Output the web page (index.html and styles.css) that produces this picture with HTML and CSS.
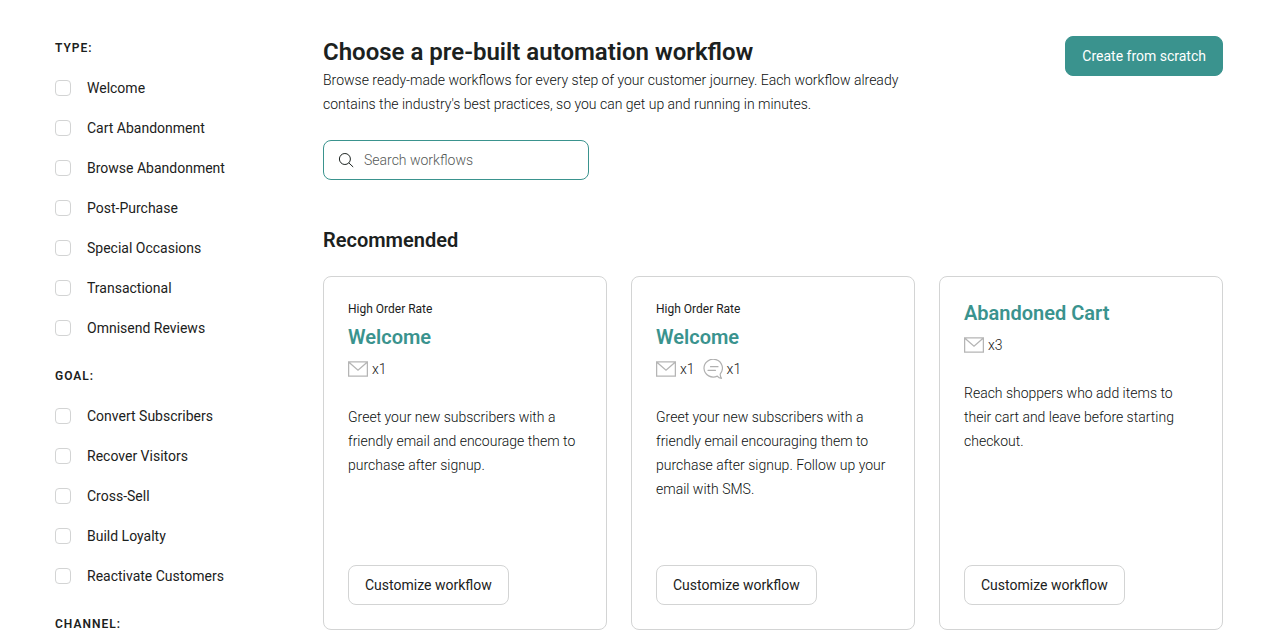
FILE: index.html
```html
<!DOCTYPE html>
<html lang="en">
<head>
<meta charset="utf-8">
<meta name="viewport" content="width=device-width, initial-scale=1">
<title>Automation workflows</title>
<link rel="stylesheet" href="styles.css">
</head>
<body>
<svg class="sprite" aria-hidden="true">
  <symbol id="mail" viewBox="0 0 20 16">
    <path d="M.6 .9h18.800v14.200H.6zM.6 .9 10 9.200 19.400 .9" fill="none" stroke="#b5b5b5" stroke-width="1.300"/>
  </symbol>
  <symbol id="chat" viewBox="0 0 20 20">
    <path d="M14.300 17.100A9.200 8.900 0 1 1 17.300 14.800Q16.900 17 18.500 19.300Q15.800 19.200 14.300 17.100M7.500 7.700h7.500M5 11.300h7.500" fill="none" stroke="#b0b0b0" stroke-width="1.200" stroke-linecap="round" stroke-linejoin="round"/>
  </symbol>
</svg>
<div class="page">
  <aside class="filters">
    <fieldset class="group">
      <legend class="group-title">TYPE:</legend>
      <label class="option"><input class="check" type="checkbox">Welcome</label>
      <label class="option"><input class="check" type="checkbox">Cart Abandonment</label>
      <label class="option"><input class="check" type="checkbox">Browse Abandonment</label>
      <label class="option"><input class="check" type="checkbox">Post-Purchase</label>
      <label class="option"><input class="check" type="checkbox">Special Occasions</label>
      <label class="option"><input class="check" type="checkbox">Transactional</label>
      <label class="option"><input class="check" type="checkbox">Omnisend Reviews</label>
    </fieldset>
    <fieldset class="group">
      <legend class="group-title">GOAL:</legend>
      <label class="option"><input class="check" type="checkbox">Convert Subscribers</label>
      <label class="option"><input class="check" type="checkbox">Recover Visitors</label>
      <label class="option"><input class="check" type="checkbox">Cross-Sell</label>
      <label class="option"><input class="check" type="checkbox">Build Loyalty</label>
      <label class="option"><input class="check" type="checkbox">Reactivate Customers</label>
    </fieldset>
    <fieldset class="group">
      <legend class="group-title">CHANNEL:</legend>
    </fieldset>
  </aside>
  <main class="content">
    <header class="header">
      <div class="intro">
        <h1 class="title">Choose a pre-built automation workflow</h1>
        <p class="text">Browse ready-made workflows for every step of your customer journey. Each workflow already contains the industry's best practices, so you can get up and running in minutes.</p>
      </div>
      <button class="button button-primary" type="button">Create from scratch</button>
    </header>
    <label class="search">
      <svg class="search-icon" viewBox="0 0 16 16" aria-hidden="true"><path d="M12.400 7a5.500 5.500 0 1 1-11 0a5.500 5.500 0 0 1 11 0M10.800 10.900 15.200 15" fill="none" stroke="#1f2624" stroke-width="1"/></svg>
      <input class="search-input" type="text" placeholder="Search workflows" aria-label="Search workflows">
    </label>
    <h2 class="section-title">Recommended</h2>
    <div class="cards">
      <article class="card">
        <p class="tag">High Order Rate</p>
        <h3 class="card-title">Welcome</h3>
        <div class="channels">
          <span class="channel"><svg class="icon-mail" aria-hidden="true"><use href="#mail"/></svg>x1</span>
        </div>
        <p class="text card-text">Greet your new subscribers with a friendly email and encourage them to purchase after signup.</p>
        <button class="button" type="button">Customize workflow</button>
      </article>
      <article class="card">
        <p class="tag">High Order Rate</p>
        <h3 class="card-title">Welcome</h3>
        <div class="channels">
          <span class="channel"><svg class="icon-mail" aria-hidden="true"><use href="#mail"/></svg>x1</span>
          <span class="channel"><svg class="icon-chat" aria-hidden="true"><use href="#chat"/></svg>x1</span>
        </div>
        <p class="text card-text">Greet your new subscribers with a friendly email encouraging them to purchase after signup. Follow up your email with SMS.</p>
        <button class="button" type="button">Customize workflow</button>
      </article>
      <article class="card">
        <h3 class="card-title">Abandoned Cart</h3>
        <div class="channels">
          <span class="channel"><svg class="icon-mail" aria-hidden="true"><use href="#mail"/></svg>x3</span>
        </div>
        <p class="text card-text">Reach shoppers who add items to their cart and leave before starting checkout.</p>
        <button class="button" type="button">Customize workflow</button>
      </article>
    </div>
  </main>
</div>
</body>
</html>
```
FILE: styles.css
```css
* {
  box-sizing: border-box;
}

body {
  margin: 0;
  background: #fff;
  color: #1b2120;
  font: 400 14px/24px Roboto, "Liberation Sans", sans-serif;
}

h1, h2, h3, p {
  margin: 0;
}

.sprite {
  display: none;
}

.page {
  display: grid;
  grid-template-columns: 244px minmax(0, 1fr);
  gap: 24px;
  padding: 36px 61px 0 55px;
}

.filters {
  display: flex;
  flex-direction: column;
  gap: 24px;
}

.group {
  margin: 0;
  padding: 0;
  border: 0;
  min-width: 0;
}

.group-title {
  padding: 0;
  font-size: 12px;
  font-weight: 600;
  letter-spacing: 1px;
}

.option {
  display: flex;
  align-items: center;
  gap: 16px;
  margin-top: 16px;
}

.check {
  appearance: none;
  width: 16px;
  height: 16px;
  margin: 0;
  border: 1px solid #d3d4d4;
  border-radius: 4px;
  background: #fff;
}

.check:checked {
  border-color: #3a938e;
  background: #3a938e;
}

.header {
  display: flex;
  justify-content: space-between;
  align-items: flex-start;
  gap: 24px;
}

.intro {
  max-width: 600px;
}

.title {
  font-size: 24px;
  line-height: 32px;
  font-weight: 600;
}

.text {
  color: #0c100f;
  font-weight: 300;
}

.button {
  flex: none;
  height: 40px;
  padding: 0 16px;
  border: 1px solid #d3d4d4;
  border-radius: 8px;
  background: #fff;
  color: inherit;
  font: inherit;
  white-space: nowrap;
  cursor: pointer;
}

.button-primary {
  border-color: #3a938e;
  background: #3a938e;
  color: #fff;
}

.search {
  display: flex;
  align-items: center;
  gap: 10px;
  width: 266px;
  height: 40px;
  margin-top: 24px;
  padding: 0 14px;
  border: 1px solid #3a938e;
  border-radius: 8px;
}

.search-icon {
  flex: none;
  width: 16px;
  height: 16px;
}

.search-input {
  flex: 1;
  min-width: 0;
  padding: 0;
  border: 0;
  outline: 0;
  background: none;
  color: inherit;
  font: inherit;
  font-weight: 300;
}

.search-input::placeholder {
  color: #555957;
}

.section-title {
  margin: 48px 0 24px;
  font-size: 20px;
  font-weight: 600;
}

.cards {
  display: grid;
  grid-template-columns: repeat(3, minmax(0, 1fr));
  gap: 24px;
}

.card {
  display: flex;
  flex-direction: column;
  align-items: flex-start;
  padding: 24px;
  border: 1px solid #d3d4d4;
  border-radius: 8px;
}

.tag {
  margin-bottom: 8px;
  font-size: 12px;
  line-height: 16px;
}

.card-title {
  color: #3a938e;
  font-size: 20px;
  font-weight: 600;
}

.channels {
  display: flex;
  gap: 8px;
  margin: 8px 0 24px;
  font-weight: 300;
}

.channel {
  display: flex;
  align-items: center;
  gap: 4px;
}

.icon-mail {
  width: 20px;
  height: 16px;
}

.icon-chat {
  width: 20px;
  height: 20px;
}

.card-text {
  margin-bottom: 64px;
}

.card .button {
  margin-top: auto;
}
```
